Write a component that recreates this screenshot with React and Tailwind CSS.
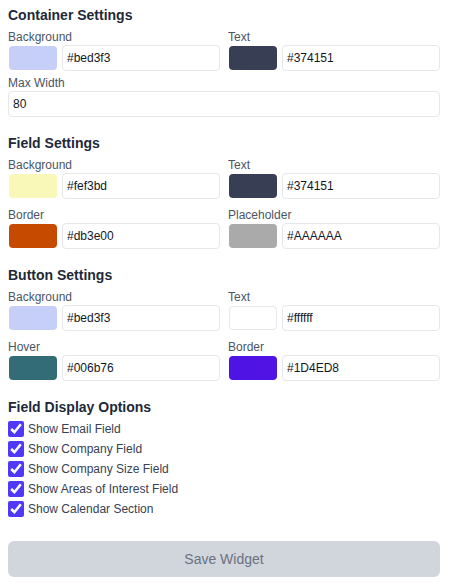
import React from "react";

function ColorField({ label, swatch, value }) {
  return (
    <div>
      <div className="text-xs leading-4 text-gray-600">{label}</div>
      <div className="flex items-center gap-[5px]">
        <div className={"ml-px h-6 w-12 shrink-0 rounded " + swatch} />
        <input
          readOnly
          value={value}
          className="h-[26px] min-w-0 flex-1 rounded border border-gray-200 bg-white px-1 text-xs text-gray-900 outline-none"
        />
      </div>
    </div>
  );
}

function Section({ title, children }) {
  return (
    <div>
      <h3 className="mb-1 text-sm font-bold leading-5 text-gray-800">{title}</h3>
      {children}
    </div>
  );
}

export default function App() {
  const options = [
    "Show Email Field",
    "Show Company Field",
    "Show Company Size Field",
    "Show Areas of Interest Field",
    "Show Calendar Section",
  ];
  return (
    <div className="max-w-md bg-white px-2 pt-[5px] pb-2 font-['Liberation_Sans',Arial,sans-serif]">
      <div className="space-y-4">
        <Section title="Container Settings">
          <div className="grid grid-cols-2 gap-x-2 gap-y-2">
            <ColorField label="Background" swatch="bg-[#c6cff8]" value="#bed3f3" />
            <ColorField label="Text" swatch="bg-[#383e53]" value="#374151" />
          </div>
          <div className="mt-1">
            <div className="text-xs leading-4 text-gray-600">Max Width</div>
            <input
              readOnly
              value="80"
              className="h-[26px] w-full rounded border border-gray-200 bg-white px-1 text-xs text-gray-900 outline-none"
            />
          </div>
        </Section>

        <Section title="Field Settings">
          <div className="grid grid-cols-2 gap-x-2 gap-y-2">
            <ColorField label="Background" swatch="bg-[#f9f8b9]" value="#fef3bd" />
            <ColorField label="Text" swatch="bg-[#383e53]" value="#374151" />
            <ColorField label="Border" swatch="bg-[#c64a00]" value="#db3e00" />
            <ColorField label="Placeholder" swatch="bg-[#aaaaaa]" value="#AAAAAA" />
          </div>
        </Section>

        <Section title="Button Settings">
          <div className="grid grid-cols-2 gap-x-2 gap-y-2">
            <ColorField label="Background" swatch="bg-[#c6cff8]" value="#bed3f3" />
            <ColorField label="Text" swatch="bg-white border border-gray-200" value="#ffffff" />
            <ColorField label="Hover" swatch="bg-[#336b76]" value="#006b76" />
            <ColorField label="Border" swatch="bg-[#4f14e3]" value="#1D4ED8" />
          </div>
        </Section>

        <Section title="Field Display Options">
          <div className="space-y-1">
            {options.map((o) => (
              <label key={o} className="flex items-center gap-1 text-xs leading-4 text-gray-700">
                <input type="checkbox" checked readOnly className="h-4 w-4 accent-indigo-600" />
                <span>{o}</span>
              </label>
            ))}
          </div>
        </Section>
      </div>

      <button className="mt-6 w-full rounded-md bg-gray-300 py-2 text-sm leading-5 text-gray-500">
        Save Widget
      </button>
    </div>
  );
}
